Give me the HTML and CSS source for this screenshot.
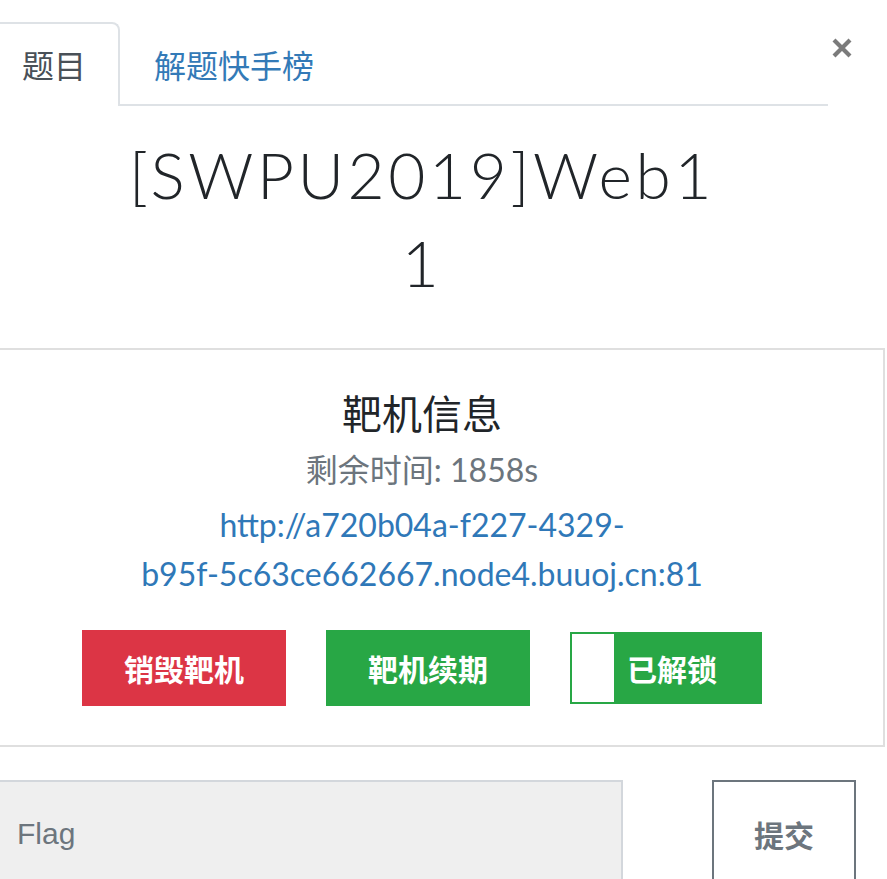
FILE: index.html
```html
<!DOCTYPE html>
<html lang="zh-CN">
<head>
<meta charset="utf-8">
<title>[SWPU2019]Web11</title>
<link rel="stylesheet" href="styles.css">
</head>
<body>
<div class="modal">
  <div class="modal-header">
    <ul class="tabs">
      <li class="tab active">题目</li>
      <li class="tab">解题快手榜</li>
    </ul>
    <button class="close" type="button" aria-label="Close">
      <svg viewBox="0 0 22 22" width="22" height="22"><path d="M3 3 L19 19 M19 3 L3 19" stroke="#7b7b7b" stroke-width="4.2" stroke-linecap="butt" fill="none"/></svg>
    </button>
  </div>
  <h1 class="challenge-title">[SWPU2019]Web11</h1>
  <div class="card">
    <h2 class="card-title">靶机信息</h2>
    <p class="remain">剩余时间: 1858s</p>
    <p class="url-wrap"><a class="url" href="#"><span class="nw">http://a720b04a-f227-4329-</span><span class="nw">b95f-5c63ce662667.node4.buuoj.cn:81</span></a></p>
    <div class="actions">
      <button class="btn btn-danger" type="button">销毁靶机</button>
      <button class="btn btn-success" type="button">靶机续期</button>
      <div class="toggle"><span class="toggle-knob"></span><span class="toggle-label">已解锁</span></div>
    </div>
  </div>
  <form class="flag-form">
    <input class="flag-input" type="text" placeholder="Flag">
    <button class="btn-submit" type="button">提交</button>
  </form>
</div>
</body>
</html>
```
FILE: styles.css
```css
html, body {
  margin: 0;
  padding: 0;
  background: #fff;
  overflow: hidden;
}
body {
  font-family: "Lato", "Noto Sans CJK SC", sans-serif;
  color: #212529;
}
.modal {
  width: 926px;
  margin-left: -41px;
}
.modal-header {
  display: flex;
  align-items: flex-start;
  padding-top: 22px;
}
.tabs {
  flex: 1;
  display: flex;
  list-style: none;
  margin: 0;
  padding: 0 0 0 29px;
  border-bottom: 2px solid #dee2e6;
}
.tab {
  font-size: 32px;
  line-height: 48px;
  padding: 16px 32px;
  border: 2px solid transparent;
  border-bottom: 0;
  border-radius: 8px 8px 0 0;
  margin-bottom: -2px;
  color: #337ab7;
  font-family: "Noto Sans CJK SC", sans-serif;
}
.tab.active {
  color: #495057;
  border-color: #dee2e6;
  background: #fff;
  padding-bottom: 18px;
}
.close {
  background: none;
  border: 0;
  padding: 0;
  margin: 15px 32px 0 3px;
  width: 22px;
  height: 22px;
  display: flex;
}
.challenge-title {
  width: 600px;
  margin: 25px auto 0;
  text-align: center;
  font-weight: 300;
  font-size: 64px;
  line-height: 88px;
  letter-spacing: 3.6px;
  overflow-wrap: anywhere;
}
.card {
  margin-top: 41px;
  border: 2px solid #dfdfdf;
  text-align: center;
  padding: 38px 20px 39px;
}
.card-title {
  margin: 0;
  font-weight: 400;
  font-size: 40px;
  line-height: 48px;
  font-family: "Noto Sans CJK SC", sans-serif;
}
.remain {
  margin: 10px 0 0;
  font-size: 32px;
  line-height: 48px;
  color: #6c757d;
}
.url-wrap {
  margin: 6px 0 0;
  font-size: 32px;
  line-height: 49px;
}
.url {
  color: #2f78b8;
  text-decoration: none;
}
.nw {
  white-space: nowrap;
}
.actions {
  margin-top: 32px;
  display: flex;
  justify-content: center;
  align-items: center;
  gap: 40px;
}
.btn {
  width: 204px;
  height: 76px;
  border: 0;
  color: #fff;
  font-size: 30px;
  font-weight: 700;
  font-family: "Noto Sans CJK SC", sans-serif;
  padding: 0;
}
.btn-danger { background: #dc3545; }
.btn-success { background: #28a745; }
.toggle {
  width: 192px;
  height: 72px;
  box-sizing: border-box;
  border: 2px solid #28a745;
  background: #28a745;
  display: flex;
  align-items: center;
}
.toggle-knob {
  width: 42px;
  height: 68px;
  background: #fff;
}
.toggle-label {
  padding-left: 13px;
  color: #fff;
  font-size: 30px;
  font-weight: 700;
  font-family: "Noto Sans CJK SC", sans-serif;
}
.flag-form {
  margin-top: 33px;
  display: flex;
  align-items: flex-start;
}
.flag-input {
  width: 664px;
  height: 108px;
  box-sizing: border-box;
  border: 2px solid #d3d7dc;
  background: #efefef;
  padding: 0 0 0 56px;
  font-size: 30px;
  font-family: "Liberation Sans", Arial, sans-serif;
  color: #495057;
  outline: none;
  margin: 0;
}
.flag-input::placeholder {
  color: #6c757d;
}
.btn-submit {
  margin-left: 89px;
  width: 144px;
  height: 120px;
  box-sizing: border-box;
  border: 2px solid #6c757d;
  background: #fff;
  color: #6c757d;
  font-size: 30px;
  font-weight: 700;
  font-family: "Noto Sans CJK SC", sans-serif;
  padding: 0 0 12px;
}
```
